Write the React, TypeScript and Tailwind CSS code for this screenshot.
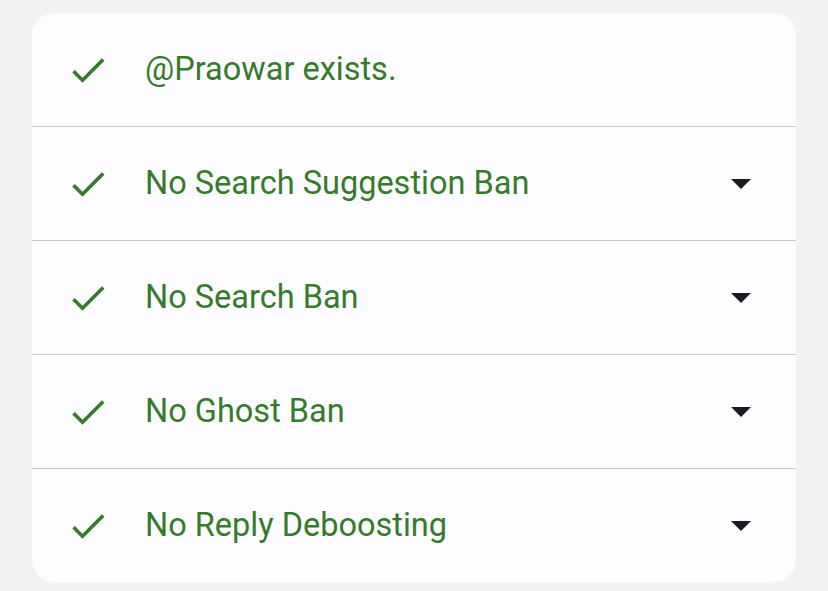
import React from 'react'

const rows = [
    { label: '@Praowar exists.', expandable: false },
    { label: 'No Search Suggestion Ban', expandable: true },
    { label: 'No Search Ban', expandable: true },
    { label: 'No Ghost Ban', expandable: true },
    { label: 'No Reply Deboosting', expandable: true },
]

function Check() {
    return (
        <svg width="44" height="44" viewBox="0 0 24 24" className="shrink-0">
            <path d="M9 16.17 4.83 12l-1.42 1.41L9 19 21 7l-1.41-1.41z" fill="#367b2c" />
        </svg>
    )
}

function Caret() {
    return (
        <svg width="20" height="10" viewBox="0 0 20 10" className="shrink-0">
            <path d="M0 0h20L10 10z" fill="#1c1b1f" />
        </svg>
    )
}

export default function App() {
    return (
        <div className="min-h-[591px] w-[828px] bg-[#f2f3f4] pt-[13px] px-[32px]" style={{ fontFamily: 'Roboto, "Open Sans", sans-serif' }}>
            <div className="bg-[#fdfcfe] rounded-[22px] overflow-hidden">
                {rows.map((row, i) => (
                    <div key={row.label} className={i > 0 ? 'border-t border-[#c6c5c8]' : ''}>
                        <div className="h-[113px] flex items-center pl-[34px] pr-[45px]">
                            <Check />
                            <span className="ml-[35px] text-[32.5px] leading-none text-[#367b2c] flex-1">{row.label}</span>
                            {row.expandable && <Caret />}
                        </div>
                    </div>
                ))}
            </div>
        </div>
    )
}
